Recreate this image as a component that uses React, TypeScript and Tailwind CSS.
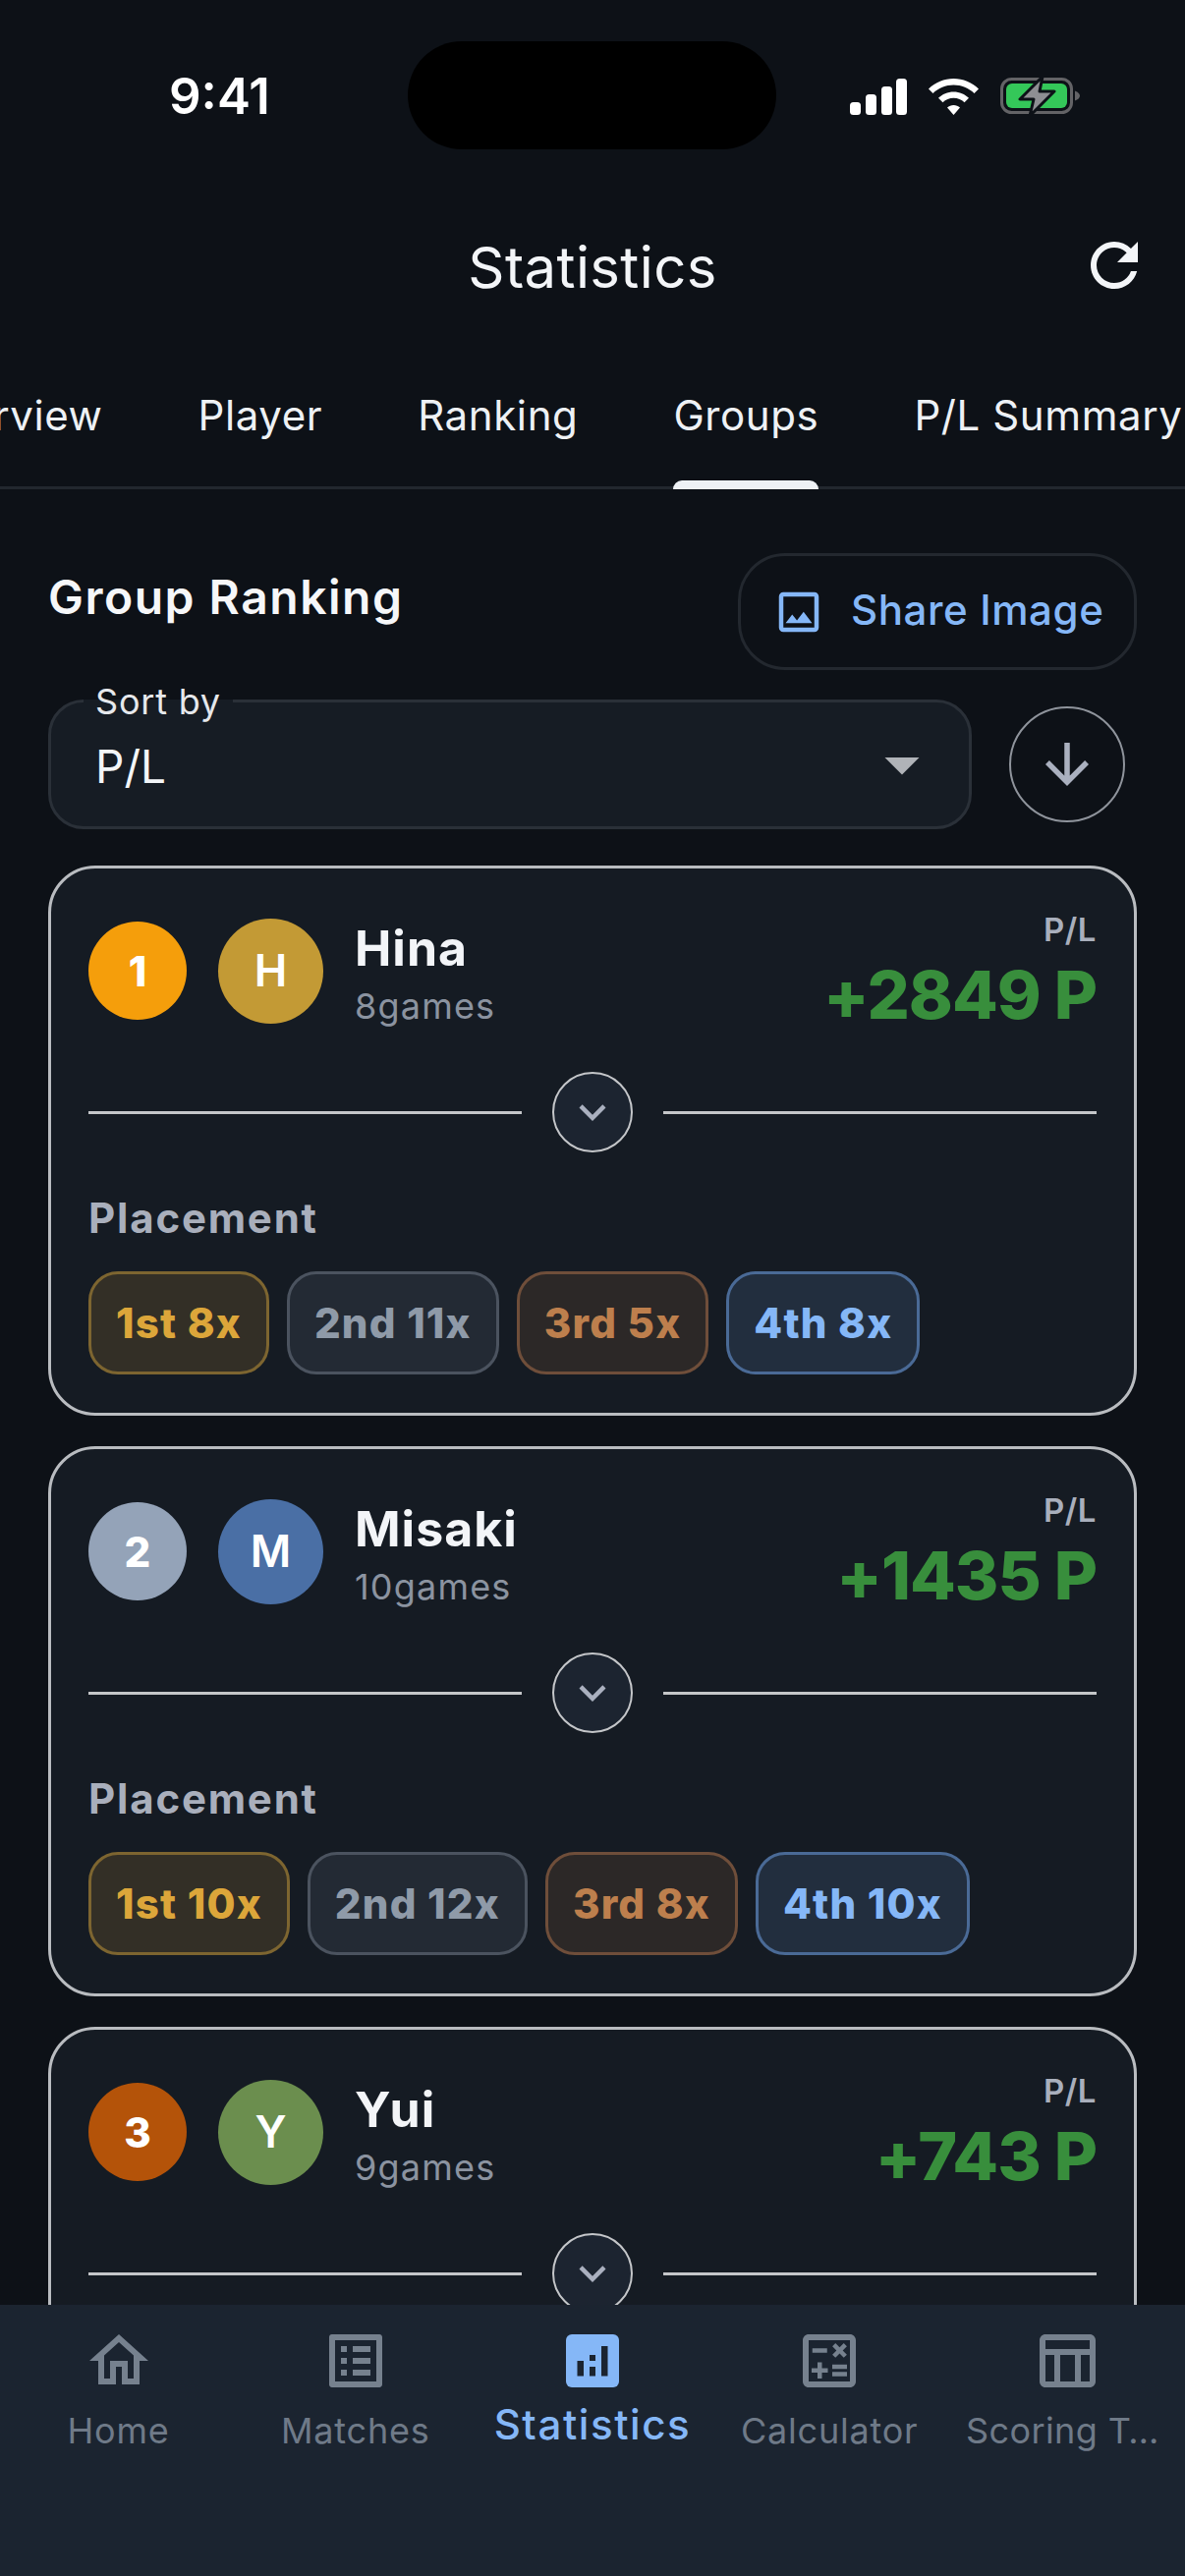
import React from 'react';
import {
  MdRefresh,
  MdOutlineImage,
  MdArrowDownward,
  MdArrowDropDown,
  MdExpandMore,
  MdOutlineHome,
  MdOutlineListAlt,
  MdOutlineCalculate,
  MdOutlineTableChart,
} from 'react-icons/md';

const players = [
  {
    rank: 1, name: 'Hina', initial: 'H', games: '8games', pl: '+2849 P',
    rankBg: 'bg-[#f59e0b]', avatarBg: 'bg-[#c39a35]',
    chips: ['1st 8x', '2nd 11x', '3rd 5x', '4th 8x'],
  },
  {
    rank: 2, name: 'Misaki', initial: 'M', games: '10games', pl: '+1435 P',
    rankBg: 'bg-[#94a3b8]', avatarBg: 'bg-[#4a6fa5]',
    chips: ['1st 10x', '2nd 12x', '3rd 8x', '4th 10x'],
  },
  {
    rank: 3, name: 'Yui', initial: 'Y', games: '9games', pl: '+743 P',
    rankBg: 'bg-[#b45309]', avatarBg: 'bg-[#6b8e4e]',
    chips: [],
  },
];

const chipStyles = [
  'bg-[#332f26] border-[#7d6530] text-[#dca63a]',
  'bg-[#232a34] border-[#4b535f] text-[#8f9aa8]',
  'bg-[#2c2827] border-[#6f4e3a] text-[#bd7f4d]',
  'bg-[#222e3e] border-[#4a6a96] text-[#85b7f7]',
];

const StatsIcon = () => (
  <svg width="72" height="72" viewBox="0 0 72 72">
    <rect x="9" y="9" width="54" height="54" rx="6" fill="currentColor" />
    <g fill="#1b2430">
      <rect x="20.500" y="36" width="6.500" height="15.500" />
      <rect x="33" y="30" width="6" height="6" />
      <rect x="33" y="42" width="6" height="9.500" />
      <rect x="45" y="21" width="6.500" height="30.500" />
    </g>
  </svg>
);

const navItems = [
  { label: 'Home', icon: <MdOutlineHome size={72} /> },
  { label: 'Matches', icon: <MdOutlineListAlt size={72} /> },
  { label: 'Statistics', icon: <StatsIcon />, active: true },
  { label: 'Calculator', icon: <MdOutlineCalculate size={72} /> },
  { label: 'Scoring T…', icon: <MdOutlineTableChart size={72} />, tight: true },
];

const StatusIcons = () => (
  <div className="flex items-center gap-[22px]">
    <svg width="58" height="37" viewBox="0 0 58 37" fill="#fff">
      <rect x="0" y="24" width="11" height="13" rx="3.5" />
      <rect x="16" y="16" width="11" height="21" rx="3.5" />
      <rect x="32" y="8" width="11" height="29" rx="3.5" />
      <rect x="47" y="0" width="11" height="37" rx="3.5" />
    </svg>
    <svg width="51" height="37" viewBox="0 0 51 37" fill="#fff">
      <path d="M25.5 0C35 0 44 3.800 51 10.500L46.500 15C41 9.700 33.500 6.500 25.500 6.500S10 9.700 4.500 15L0 10.500C7 3.800 16 0 25.500 0Z" />
      <path d="M25.500 13.500C31.500 13.500 37 15.900 41 19.800L36.500 24.300C33.600 21.500 29.700 19.800 25.500 19.800S17.400 21.500 14.500 24.300L10 19.800C14 15.900 19.500 13.500 25.500 13.500Z" />
      <path d="M25.500 27C28 27 30.300 28 32 29.600L25.500 37L19 29.600C20.700 28 23 27 25.500 27Z" />
    </svg>
    <svg width="82" height="40" viewBox="0 0 82 40">
      <rect x="1.500" y="2.500" width="71" height="34" rx="10" fill="none" stroke="#636366" strokeWidth="3" />
      <rect x="6" y="7" width="62" height="25" rx="6" fill="#34c759" />
      <path d="M76 14.500C79 15.500 81 17.500 81 19.500S79 23.500 76 24.500Z" fill="#636366" />
      <path d="M43 0L20 23H34L30 40L55 15H40Z" fill="#8e8e93" stroke="#0d1117" strokeWidth="3" strokeLinejoin="round" />
    </svg>
  </div>
);

const PlayerCard = ({ p }: { p: (typeof players)[number] }) => (
  <div className="flex h-[560px] shrink-0 flex-col rounded-[48px] border-[3px] border-[#b9bcc0] bg-[#151b23] px-[38px] pt-[50px]">
    <div className="flex h-[108px] items-center">
      <div className={`flex h-[100px] w-[100px] items-center justify-center rounded-full text-[42px] font-extrabold text-white ${p.rankBg}`}>
        {p.rank}
      </div>
      <div className={`ml-[32px] flex h-[107px] w-[107px] items-center justify-center rounded-full text-[45px] font-semibold text-white ${p.avatarBg}`}>
        {p.initial}
      </div>
      <div className="ml-[32px] flex flex-col pt-[6px]">
        <span className="text-[50px] leading-[58px] font-bold tracking-[1px] text-[#f3f5f8]">{p.name}</span>
        <span className="mt-[8px] text-[36px] leading-[44px] tracking-[1.2px] text-[#8b93a0]">{p.games}</span>
      </div>
      <div className="ml-auto flex flex-col items-end pt-[6px]">
        <span className="mt-[-10px] text-[33px] leading-[40px] font-semibold tracking-[0.5px] text-[#a9afbc]">P/L</span>
        <span className="mt-[11px] text-[68px] leading-[70px] font-extrabold tracking-[-1px] text-[#388e3c]">{p.pl}</span>
      </div>
    </div>
    <div className="mt-[49px] flex items-center">
      <div className="h-[3px] flex-1 bg-[#c4c6c9]" />
      <div className="mx-[31px] flex h-[82px] w-[82px] items-center justify-center rounded-full border-2 border-[#c4c6c9] bg-[#1c2430]">
        <MdExpandMore size={54} className="text-[#aab0bf]" />
      </div>
      <div className="h-[3px] flex-1 bg-[#c4c6c9]" />
    </div>
    {p.chips.length > 0 && (
      <>
        <div className="mt-[43px] text-[42px] leading-[48px] font-bold tracking-[1.8px] text-[#a9afbc]">Placement</div>
        <div className="mt-[30px] flex gap-[18px]">
          {p.chips.map((chip, i) => (
            <div
              key={chip}
              className={`flex h-[105px] items-center rounded-[30px] border-[3px] px-[25px] text-[42px] font-extrabold tracking-[1.2px] ${chipStyles[i]}`}
            >
              {chip}
            </div>
          ))}
        </div>
      </>
    )}
  </div>
);

export default function App() {
  return (
    <div className="flex h-[2622px] w-[1206px] flex-col overflow-hidden bg-[#0d1117] font-['Inter',sans-serif] text-white">
      {/* status bar */}
      <div className="relative flex h-[190px] shrink-0 items-start justify-between pt-[72px] pr-[106px] pl-[172px]">
        <span className="text-[51px] leading-[52px] font-semibold">9:41</span>
        <div className="absolute top-[42px] left-[415px] h-[110px] w-[375px] rounded-[55px] bg-black" />
        <div className="pt-[6px]">
          <StatusIcons />
        </div>
      </div>

      {/* title */}
      <div className="relative flex h-[164px] shrink-0 justify-center pt-[46px]">
        <span className="text-[58px] leading-[72px] tracking-[0.4px] text-[#f3f5f8]">Statistics</span>
        <MdRefresh size={72} className="absolute top-[44px] right-[36px] text-[#f3f5f8]" />
      </div>

      {/* tabs */}
      <div className="h-[144px] shrink-0 overflow-hidden shadow-[inset_0_-3px_0_#22272e]">
        <div className="ml-[-88px] flex h-full w-[1500px] text-[42px] leading-[50px] tracking-[0.6px] text-[#eef1f5]">
          {['Overview', 'Player', 'Ranking', 'Groups', 'P/L Summary'].map((tab) => (
            <div key={tab} className="relative mr-[97px] pt-[44px]">
              {tab}
              {tab === 'Groups' && (
                <div className="absolute right-0 bottom-0 left-0 h-[9px] rounded-t-[9px] bg-[#eef1f5]" />
              )}
            </div>
          ))}
        </div>
      </div>

      {/* content */}
      <div className="flex min-h-0 flex-1 flex-col overflow-hidden px-[49px] pt-[65px]">
        <div className="flex h-[119px] shrink-0 items-start justify-between">
          <span className="pt-[15px] text-[48px] leading-[60px] font-semibold tracking-[1.5px] text-[#f6f7f9]">Group Ranking</span>
          <div className="flex h-[119px] w-[406px] items-center rounded-[48px] border-[3px] border-[#23282f] pl-[32px] text-[42px] leading-[50px] font-medium tracking-[0.6px] text-[#85b7f7]">
            <MdOutlineImage size={54} />
            <span className="mt-[-3px] ml-[26px]">Share Image</span>
          </div>
        </div>

        <div className="mt-[30px] flex shrink-0 items-center justify-between">
          <div className="relative flex h-[132px] w-[940px] items-center rounded-[36px] border-[3px] border-[#2a3038] bg-[#161c24] pl-[45px]">
            <div className="absolute top-[-3px] left-[33px] h-[3px] w-[152px] bg-[#161c24]" />
            <span className="absolute top-[-25px] left-[45px] text-[36px] leading-[48px] tracking-[0.8px] text-[#e6e8ec]">Sort by</span>
            <span className="pt-[4px] text-[46px] text-[#f3f5f8]">P/L</span>
            <MdArrowDropDown size={84} className="absolute top-[21px] right-[26px] text-[#b0b3b8]" />
          </div>
          <div className="mr-[12px] flex h-[118px] w-[118px] items-center justify-center rounded-full border-2 border-[#8f949c]">
            <MdArrowDownward size={66} className="text-[#aab0bf]" />
          </div>
        </div>

        <div className="mt-[37px] flex flex-col gap-[31px]">
          {players.map((p) => (
            <PlayerCard key={p.name} p={p} />
          ))}
        </div>
      </div>

      {/* bottom nav */}
      <div className="grid h-[276px] shrink-0 grid-cols-5 bg-[#1b2430]">
        {navItems.map(({ label, icon, active, tight }) => (
          <div key={label} className={`flex flex-col items-center pt-[21px] ${active ? 'text-[#85b7f7]' : 'text-[#76818e]'}`}>
            {icon}
            {active ? (
              <span className="mt-[1px] text-[42px] leading-[56px] font-medium tracking-[1.6px] whitespace-nowrap">{label}</span>
            ) : (
              <span className={`mt-[7px] text-[36px] leading-[56px] whitespace-nowrap text-[#6f7a88] ${tight ? 'mr-[8px] tracking-[0.4px]' : 'tracking-[0.8px]'}`}>{label}</span>
            )}
          </div>
        ))}
      </div>
    </div>
  );
}
